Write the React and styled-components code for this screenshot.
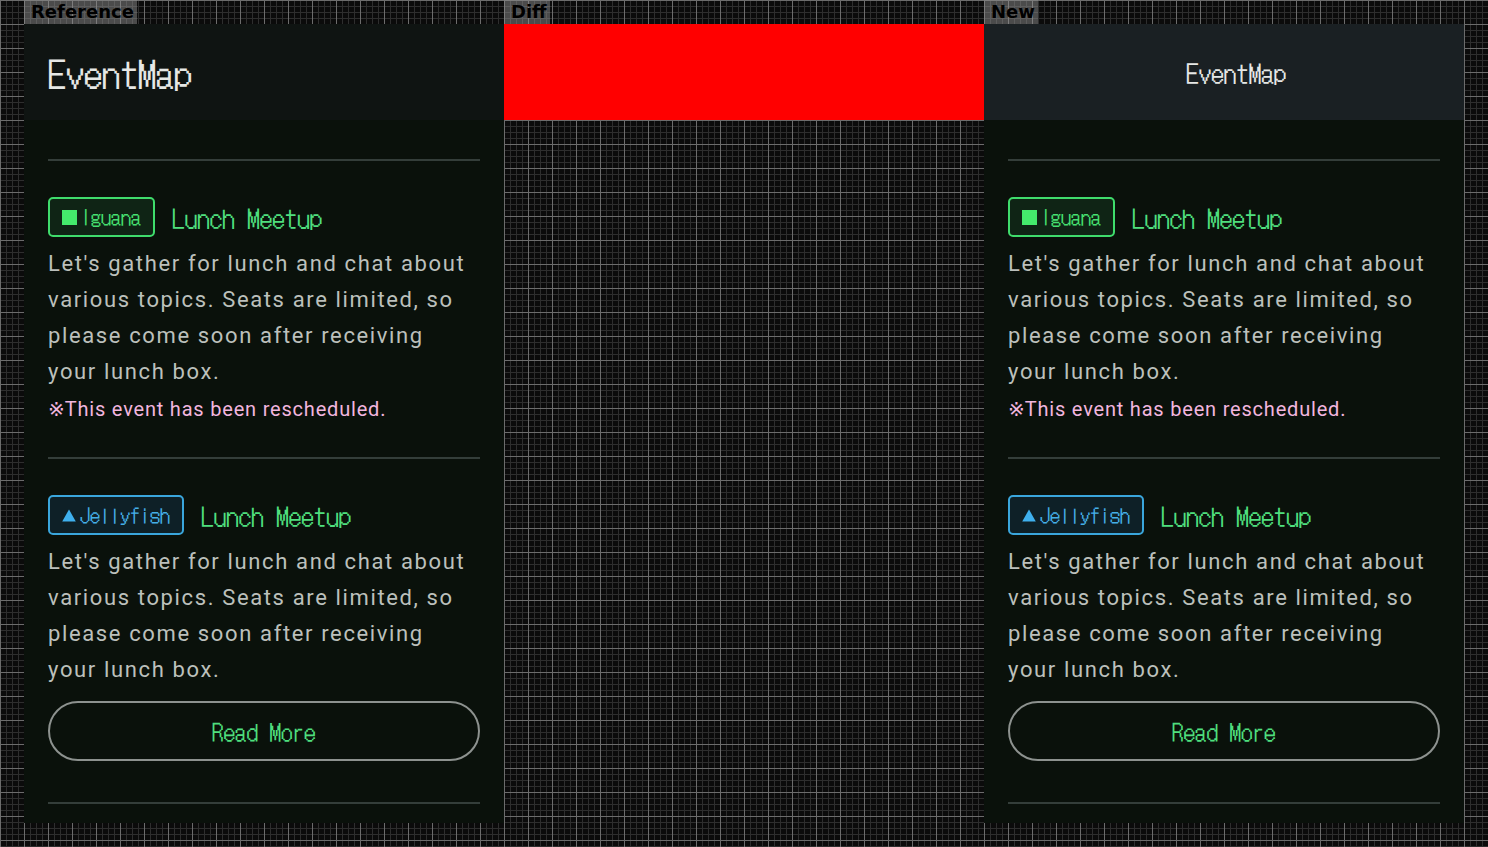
import React from "react";
import styled, { createGlobalStyle, css } from "styled-components";

const dot = `"DotGothic16", "Noto Sans CJK JP", monospace`;

const GlobalStyle = createGlobalStyle`
  html, body {
    margin: 0;
    padding: 0;
    background: #0b0b0b;
  }
`;

const events = [
  {
    id: 1,
    kind: "iguana",
    label: "Iguana",
    title: "Lunch Meetup",
    text: "Let's gather for lunch and chat about various topics. Seats are limited, so please come soon after receiving your lunch box.",
    note: "This event has been rescheduled.",
  },
  {
    id: 2,
    kind: "jellyfish",
    label: "Jellyfish",
    title: "Lunch Meetup",
    text: "Let's gather for lunch and chat about various topics. Seats are limited, so please come soon after receiving your lunch box.",
    more: true,
  },
];

const tones = {
  iguana: { line: "#3fdc6c", fill: "#0f2415", ink: "#46e070" },
  jellyfish: { line: "#3aa6dc", fill: "#0e2027", ink: "#45aee6" },
};

const Stage = styled.div`
  width: 1488px;
  height: 847px;
  box-sizing: border-box;
  padding-left: 24px;
  display: flex;
  overflow: hidden;
  background-color: #0b0b0b;
  background-image:
    linear-gradient(to right, #6c6c6c 1px, transparent 1px),
    linear-gradient(to bottom, #6c6c6c 1px, transparent 1px),
    linear-gradient(to right, #2e2e2e 1px, transparent 1px),
    linear-gradient(to bottom, #2e2e2e 1px, transparent 1px);
  background-size: 24px 24px, 24px 24px, 6px 6px, 6px 6px;
`;

const Column = styled.div`
  width: 480px;
  display: flex;
  flex-direction: column;
  align-items: flex-start;
`;

const Tag = styled.div`
  height: 24px;
  padding: 0 3px 0 7px;
  background: rgba(140, 140, 140, 0.5);
  font: bold 18px/24px "DejaVu Sans", sans-serif;
  color: #000;
`;

const Panel = styled.div`
  width: 480px;
  height: 799px;
  display: flex;
  flex-direction: column;
  background: ${({ $clear }) => ($clear ? "transparent" : "#0a110b")};
  overflow: hidden;
`;

const Header = styled.header`
  height: 96px;
  flex: none;
  display: flex;
  align-items: center;
  box-sizing: border-box;
  padding: 0 24px;
  background: ${({ $bg }) => $bg};
  justify-content: ${({ $center }) => ($center ? "center" : "flex-start")};
  ${({ $center }) =>
    $center &&
    css`
      padding-left: 48px;
    `}
`;

const pixelFont = css`
  font-family: ${dot};
  font-weight: 400;
  font-kerning: none;
  font-feature-settings: "hwid" 1;
`;

const Title = styled.h1`
  margin: 0;
  ${pixelFont};
  font-size: ${({ $size }) => $size}px;
  color: #e6e8e6;
`;

const Body = styled.div`
  padding: 39px 24px 0;
  display: flex;
  flex-direction: column;
`;

const Divider = styled.hr`
  margin: 0;
  border: 0;
  height: 2px;
  background: #343e3a;
`;

const Item = styled.article`
  padding: 36px 0 33px;
`;

const BadgeRow = styled.div`
  display: flex;
  align-items: center;
  gap: 17px;
`;

const Badge = styled.span`
  height: 40px;
  box-sizing: border-box;
  display: inline-flex;
  align-items: center;
  gap: 4px;
  padding: 0 12px;
  border: 2px solid ${({ $tone }) => tones[$tone].line};
  border-radius: 5px;
  background: ${({ $tone }) => tones[$tone].fill};
  color: ${({ $tone }) => tones[$tone].ink};
  ${pixelFont};
  font-size: 20px;
  line-height: 1;
`;

const Square = styled.i`
  width: 15px;
  height: 15px;
  background: #44ea6c;
`;

const Heading = styled.h2`
  margin: 0;
  ${pixelFont};
  font-size: 25px;
  color: #4fdf7e;
`;

const Text = styled.p`
  margin: 9px 0 0;
  padding-right: 6px;
  font-family: Roboto, sans-serif;
  font-size: 22px;
  line-height: 36px;
  letter-spacing: 1.63px;
  color: #bcc0bc;
`;

const Note = styled.p`
  margin: 4px 0 0;
  font-family: Roboto, sans-serif;
  font-size: 20px;
  line-height: 30px;
  letter-spacing: 0.8px;
  color: #f2b6df;
`;

const Mark = styled.span`
  font-family: "DejaVu Sans", sans-serif;
  letter-spacing: 0;
`;

const MoreButton = styled.button`
  display: block;
  width: 100%;
  height: 60px;
  margin: 13px 0 8px;
  border: 2px solid #8d928f;
  border-radius: 30px;
  background: transparent;
  ${pixelFont};
  font-size: 23px;
  color: #4fdf7e;
  cursor: pointer;
`;

const DiffHeader = styled.div`
  height: 96px;
  background: #ff0000;
`;

const Triangle = () => (
  <svg width="14" height="13" viewBox="0 0 14 13" aria-hidden="true">
    <path d="M7 0.5 L13.8 12.5 L0.2 12.5 Z" fill="#3fb0ee" />
  </svg>
);

const EventItem = ({ ev }) => (
  <>
    <Divider />
    <Item>
      <BadgeRow>
        <Badge $tone={ev.kind}>
          {ev.kind === "iguana" ? <Square /> : <Triangle />}
          {ev.label}
        </Badge>
        <Heading>{ev.title}</Heading>
      </BadgeRow>
      <Text>{ev.text}</Text>
      {ev.note && (
        <Note>
          <Mark>※</Mark>
          {ev.note}
        </Note>
      )}
      {ev.more && <MoreButton>Read More</MoreButton>}
    </Item>
  </>
);

const EventPanel = ({ headerBg, center, titleSize }) => (
  <Panel>
    <Header $bg={headerBg} $center={center}>
      <Title $size={titleSize}>EventMap</Title>
    </Header>
    <Body>
      {events.map((ev) => (
        <EventItem key={ev.id} ev={ev} />
      ))}
      <Divider />
    </Body>
  </Panel>
);

export default function App() {
  return (
    <>
      <GlobalStyle />
      <Stage>
        <Column>
          <Tag>Reference</Tag>
          <EventPanel headerBg="#0f1412" titleSize={36} />
        </Column>
        <Column>
          <Tag>Diff</Tag>
          <Panel $clear>
            <DiffHeader />
          </Panel>
        </Column>
        <Column>
          <Tag>New</Tag>
          <EventPanel headerBg="#1a2023" center titleSize={25} />
        </Column>
      </Stage>
    </>
  );
}
